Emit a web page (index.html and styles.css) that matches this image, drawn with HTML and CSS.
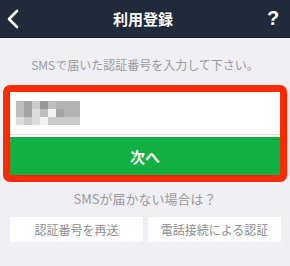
FILE: index.html
```html
<!DOCTYPE html>
<html lang="ja">
<head>
    <meta charset="UTF-8">
    <meta name="viewport" content="width=device-width, initial-scale=1.0">
    <link rel="stylesheet" href="styles.css">
    <title>利用登録</title>
</head>
<body>
    <header class="topbar">
        <svg class="back" width="14" height="20" viewBox="0 0 14 20">
            <polyline points="11,2 3,10 11,18" fill="none" stroke="#fff" stroke-width="2.6" stroke-linecap="round" stroke-linejoin="round"/>
        </svg>
        <h1>利用登録</h1>
        <span class="help">?</span>
    </header>

    <main>
        <p class="hint">SMSで届いた認証番号を入力して下さい。</p>

        <div class="card">
            <div class="code-field">
                <div class="mosaic">
                    <span class="g3"></span><span class="g5"></span><span class="g2"></span><span class="g6"></span><span class="g3"></span><span class="g4"></span><span class="g4"></span><span class="g4"></span>
                    <span class="g3"></span><span class="g5"></span><span class="g1"></span><span class="g3"></span><span class="g0"></span><span class="g5"></span><span class="g4"></span><span class="g4"></span>
                    <span class="g1"></span><span class="g2"></span><span class="g1"></span><span class="g0"></span><span class="g2"></span><span class="g2"></span><span class="g2"></span><span class="g2"></span>
                </div>
            </div>
            <button type="button" class="next-btn">次へ</button>
        </div>

        <p class="hint no-sms">SMSが届かない場合は？</p>

        <div class="actions">
            <button type="button" class="alt-btn">認証番号を再送</button>
            <button type="button" class="alt-btn">電話接続による認証</button>
        </div>
    </main>
</body>
</html>
```

FILE: styles.css
```css
body {
    margin: 0;
    padding: 0;
    background-color: #efeff4;
    font-family: "Noto Sans CJK JP", "Noto Sans", sans-serif;
}

.topbar {
    height: 37px;
    border-bottom: 1px solid #141b27;
    background-color: #212a3a;
    display: flex;
    align-items: center;
    justify-content: space-between;
    padding: 0 10px 0 6px;
}

.topbar h1 {
    margin: 0;
    font-size: 15px;
    font-weight: bold;
    color: white;
}

.back {
    display: block;
}

.help {
    font-family: "Liberation Sans", Arial, sans-serif;
    font-size: 20px;
    font-weight: bold;
    color: white;
    width: 14px;
    text-align: center;
}

main {
    padding: 0;
}

.hint {
    margin: 19px 0 0;
    font-size: 12px;
    line-height: 16px;
    text-align: center;
    color: #9a9a9e;
}

.card {
    margin: 12px 3px 0;
    border: 7px solid #ff2a00;
    border-radius: 7px;
    background-color: white;
    overflow: hidden;
}

.code-field {
    height: 42px;
    padding: 0 0 0 6px;
    display: flex;
    align-items: center;
    border-bottom: 1px solid #f3d6da;
}

.mosaic {
    display: grid;
    grid-template-columns: repeat(8, 8px);
    grid-template-rows: repeat(3, 8px);
}

.g0 { background-color: #f2f2f2; }
.g1 { background-color: #dcdcdc; }
.g2 { background-color: #cbcbcb; }
.g3 { background-color: #bdbdbd; }
.g4 { background-color: #b3b3b3; }
.g5 { background-color: #a4a4a4; }
.g6 { background-color: #969696; }

.next-btn {
    display: block;
    width: 100%;
    height: 38px;
    margin-top: 2px;
    border: none;
    background-color: #10b043;
    color: white;
    font-family: inherit;
    font-size: 15px;
    font-weight: bold;
}

.no-sms {
    margin-top: 9px;
    font-size: 13px;
}

.actions {
    display: flex;
    gap: 5px;
    margin: 10px 9px 0 10px;
}

.alt-btn {
    flex: 1;
    height: 25px;
    border: none;
    background-color: white;
    color: #8e8e92;
    font-family: inherit;
    font-size: 12px;
    padding: 0;
}
```
